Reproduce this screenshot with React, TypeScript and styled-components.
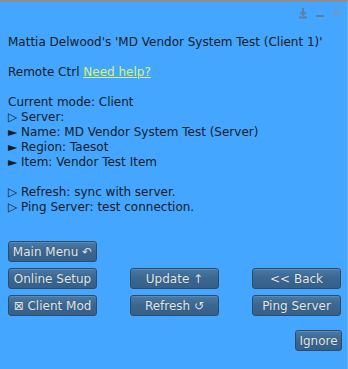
import React from "react";
import styled, { createGlobalStyle } from "styled-components";

const GlobalStyle = createGlobalStyle`
  html, body {
    margin: 0;
    padding: 0;
    background: #44a6ff;
  }
`;

const Floater = styled.div`
  width: 348px;
  height: 369px;
  box-sizing: border-box;
  background: #44a6ff;
  border-top: 2px solid #8a8f96;
  border-right: 1px solid #62b4ff;
  font-family: "DejaVu Sans", sans-serif;
  display: flex;
  flex-direction: column;
`;

const TitleBar = styled.div`
  height: 33px;
  display: flex;
  justify-content: flex-end;
  align-items: flex-start;
  gap: 7px;
  padding: 6px 5px 0 0;
  box-sizing: border-box;
`;

const Body = styled.div`
  padding: 0 8px;
  font-size: 12px;
  line-height: 15px;
  color: #161c24;
  white-space: pre;
`;

const Line = styled.div`
  height: 15px;
`;

const HelpLink = styled.a`
  color: #d8f36b;
  text-decoration: underline;
  cursor: pointer;
`;

const ButtonGrid = styled.div`
  display: grid;
  grid-template-columns: repeat(3, 89px);
  column-gap: 33px;
  row-gap: 6px;
  padding: 0 8px;
  margin-top: 26px;
`;

const Button = styled.button<{ $col?: number }>`
  grid-column: ${(p) => p.$col ?? "auto"};
  height: 21px;
  box-sizing: border-box;
  padding: 0 2px;
  border: 1px solid #2b4c6d;
  border-radius: 3px;
  background: linear-gradient(#4a7aa6, #3a6690 50%, #34608a);
  box-shadow: inset 0 1px 0 rgba(255, 255, 255, 0.12);
  color: #e4e8ec;
  font-family: "DejaVu Sans", sans-serif;
  font-size: 12px;
  white-space: nowrap;
  text-align: center;
  text-shadow: 0 0 1px rgba(0, 0, 0, 0.4);
`;

const Footer = styled.div`
  display: flex;
  justify-content: flex-end;
  padding: 0 5px 0 0;
  margin-top: 14px;
`;

const SmallButton = styled(Button)`
  width: 47px;
  padding: 0;
`;

const IconSvg = styled.svg`
  display: block;
`;

const Icons = () => (
  <>
    <IconSvg width="10" height="12" viewBox="0 0 10 12">
      <path d="M5 0 V6" stroke="#5f7f9e" strokeWidth="2" />
      <path d="M2 4 L5 7 L8 4" stroke="#5f7f9e" strokeWidth="1.6" fill="none" />
      <rect x="1" y="8.5" width="8" height="2" fill="#5f7f9e" />
    </IconSvg>
    <IconSvg width="10" height="12" viewBox="0 0 10 12">
      <rect x="1" y="7" width="8" height="2" fill="#5f7f9e" />
    </IconSvg>
    <IconSvg width="10" height="12" viewBox="0 0 10 12">
      <path d="M1.5 1.5 L8.5 8.5 M8.5 1.5 L1.5 8.5" stroke="#7d95ab" strokeWidth="1.3" />
    </IconSvg>
  </>
);

export default function App() {
  return (
    <>
      <GlobalStyle />
      <Floater>
        <TitleBar>
          <Icons />
        </TitleBar>
        <Body>
          <Line>Mattia Delwood's 'MD Vendor System Test (Client 1)'</Line>
          <Line />
          <Line>
            Remote Ctrl <HelpLink>Need help?</HelpLink>
          </Line>
          <Line />
          <Line>Current mode: Client</Line>
          <Line>▷ Server:</Line>
          <Line>► Name: MD Vendor System Test (Server)</Line>
          <Line>► Region: Taesot</Line>
          <Line>► Item: Vendor Test Item</Line>
          <Line />
          <Line>▷ Refresh: sync with server.</Line>
          <Line>▷ Ping Server: test connection.</Line>
        </Body>
        <ButtonGrid>
          <Button $col={1}>Main Menu ↶</Button>
          <Button $col={1}>Online Setup</Button>
          <Button>Update ↑</Button>
          <Button>&lt;&lt; Back</Button>
          <Button>⊠ Client Mod</Button>
          <Button>Refresh ↺</Button>
          <Button>Ping Server</Button>
        </ButtonGrid>
        <Footer>
          <SmallButton>Ignore</SmallButton>
        </Footer>
      </Floater>
    </>
  );
}
